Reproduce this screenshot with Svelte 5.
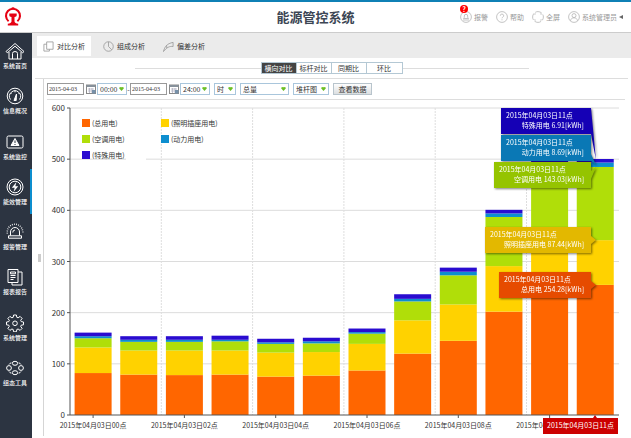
<script>
  const nav = [
    { label: '系统首页', icon: 'home' },
    { label: '信息概况', icon: 'gauge' },
    { label: '系统监控', icon: 'monitor' },
    { label: '能效管理', icon: 'energy', active: true },
    { label: '报警管理', icon: 'alarm' },
    { label: '报表报告', icon: 'report' },
    { label: '系统管理', icon: 'gear' },
    { label: '组态工具', icon: 'nodes' }
  ];

  const modes = ['横向对比', '标杆对比', '同期比', '环比'];
  let mode = $state('横向对比');
  let startDate = $state('2015-04-03');
  let endDate = $state('2015-04-03');

  // Chart geometry, in viewBox units
  const left = 26;
  const right = 575;
  const base = 315;
  const unit = 307 / 600;
  const pitch = 45.65;
  const barWidth = 37;
  const barX = (i) => left + 4.6 + i * pitch;
  const y = (v) => base - v * unit;

  const colors = ['#ff6600', '#ffd200', '#b0de09', '#0d8ecf', '#2a0cd0'];
  const legend = [
    { label: '(总用电)', color: colors[0], x: 38, y: 19 },
    { label: '(照明插座用电)', color: colors[1], x: 117, y: 19 },
    { label: '(空调用电)', color: colors[2], x: 38, y: 35 },
    { label: '(动力用电)', color: colors[3], x: 117, y: 35 },
    { label: '(特殊用电)', color: colors[4], x: 38, y: 51 }
  ];

  // total, lighting, air conditioning, power, special
  const readings = [
    [82, 50, 18, 4, 7],
    [79, 47, 17, 4, 7],
    [78, 48, 17, 4, 7],
    [79, 47, 18, 3, 8],
    [75, 47, 17, 3, 7],
    [77, 46, 17, 4, 7],
    [87, 52, 20, 3, 7],
    [120, 65, 37, 5, 9],
    [145, 71, 57, 7, 8],
    [202, 89, 96, 7, 7],
    [240, 88, 156, 9, 9],
    [254.28, 87.44, 143.03, 8.69, 6.91]
  ];

  const bars = readings.map((values, i) => {
    let sum = 0;
    return values.map((v, k) => {
      sum += v;
      return { x: barX(i), y: y(sum), h: v * unit, color: colors[k] };
    });
  });

  // from/to: where the pointer leaves the box edge; tipY: where it ends
  const tips = [
    { x: 457, y: 8, text: '特殊用电 6.91[kWh]', color: '#1500b5', from: 8, to: 34, tipY: 60 },
    { x: 457, y: 35, text: '动力用电 8.69[kWh]', color: '#0a78b5', from: 54, to: 61, tipY: 65 },
    { x: 450, y: 62, text: '空调用电 143.03[kWh]', color: '#95c400', from: 71, to: 79, tipY: 67 },
    { x: 441, y: 127, text: '照明插座用电 87.44[kWh]', color: '#e3b800', from: 136, to: 144, tipY: 140 },
    { x: 455, y: 172, text: '总用电 254.28[kWh]', color: '#e64b00', from: 181, to: 189, tipY: 185 }
  ];
</script>

{#snippet select(cls, name, options)}
  <span class="select {cls}">
    <select aria-label={name}>
      {#each options as option}<option>{option}</option>{/each}
    </select>
    <svg viewBox="0 0 6 5" aria-hidden="true"><path d="M1 0h4l1 1.5L3 5 0 1.5z" fill="#69bd25" /><path d="M1.5.8h3" stroke="#a8e36f" stroke-width=".7" /></svg>
  </span>
{/snippet}

{#snippet calendar()}
  <button class="cal" aria-label="选择日期">
    <svg viewBox="0 0 10 10"><rect x=".5" y="1" width="9" height="8.5" fill="#fff" stroke="#888" /><path d="M.5 1h9v2h-9z" fill="#87919b" /><path d="M2 5h6M2 7h6M3.5 4v5M6 4v5" stroke="#aab" stroke-width=".7" /><path d="M6 6h3.500v3.500H6z" fill="#7791aa" /></svg>
  </button>
{/snippet}

<div class="page">
  <header>
    <a class="logo" href="#home" aria-label="首页">
      <svg viewBox="0 0 18 20" fill="none" stroke="#e60012">
        <path d="M4.600 14.200A7 7 0 1 1 13.400 14.200" stroke-width="2.100" />
        <path d="M5.300 6.500h7.400v1.700c0 1-.8 1.500-2.200 1.700v4.600c.2 1.300 1.500 1.900 3.700 2.300v1.600H3.800v-1.600c2.200-.4 3.500-1 3.700-2.300V9.900c-1.400-.2-2.200-.7-2.200-1.700z" fill="#e60012" stroke="none" />
        <path d="M9 .4v2" stroke-width="2.600" />
      </svg>
    </a>
    <h1>能源管控系统</h1>
    <div class="tools">
      <button class="tool">
        <svg viewBox="0 0 12 12"><circle cx="6" cy="6" r="5.400" /><path d="M3.500 7.500h5l-.8-1.200V5a1.700 1.700 0 0 0-3.400 0v1.300zM3 9h6" /></svg>
        报警<span class="badge">?</span>
      </button>
      <button class="tool">
        <svg viewBox="0 0 12 12"><circle cx="6" cy="6" r="5.400" /><path d="M4.300 4.700a1.700 1.600 0 1 1 2.500 1.400q-.8.400-.8 1.200M6 8.300v1" /></svg>
        帮助
      </button>
      <button class="tool">
        <svg viewBox="0 0 12 12"><circle cx="6" cy="6" r="5.400" stroke-dasharray="7 1.480" stroke-dashoffset="3.500" /><path d="M2.800 4V2.800H4M8 2.800h1.200V4M9.200 8v1.200H8M4 9.200H2.800V8" stroke-width=".5" /></svg>
        全屏
      </button>
      <button class="tool">
        <svg viewBox="0 0 12 12"><circle cx="6" cy="6" r="5.400" /><circle cx="6" cy="4.600" r="2" /><path d="M2.500 9.800c.3-2 1.600-3 3.500-3s3.200 1 3.500 3" /></svg>
        系统管理员
        <svg class="caret" viewBox="0 0 4 4"><path d="M4 0v4L0 2z" /></svg>
      </button>
    </div>
  </header>

  <div class="body">
    <nav>
      {#each nav as item}
        <a href="#{item.icon}" class:active={item.active}>
          <svg viewBox="0 0 20 18">
            {#if item.icon === 'home'}
              <path d="M1 9.500 10 1.500l9 8-1.300 1.300L10 4.200l-7.700 6.600zM4 10v7h12v-7M7.500 17v-5.500q0-2 2.500-2t2.500 2V17" />
            {:else if item.icon === 'gauge'}
              <circle cx="10" cy="9" r="7.800" /><path d="M5.500 12.500a5.500 5.500 0 1 1 9 0M10 3.800v1.500M5.500 6l1 1M14.500 6l-1 1" /><path d="M9 13.500 11.500 7l-.3 6.500z" fill="#fff" />
            {:else if item.icon === 'monitor'}
              <rect x="2" y="3" width="16" height="12" rx="1.500" /><path d="M10 5.500l4 7H6z" fill="#fff" /><path d="M10 7.500v2.500M10 11v1" stroke="#2c3441" />
            {:else if item.icon === 'energy'}
              <circle cx="10" cy="9" r="8" /><circle cx="10" cy="9" r="5.800" /><path d="M11.500 4 6.800 9.800h2.900L8.500 14l4.700-5.800h-2.900z" fill="#fff" stroke="none" />
            {:else if item.icon === 'alarm'}
              <path d="M5.500 12.500V9a4.500 4.500 0 0 1 9 0v3.500M3.500 12.800h13v2.400h-13zM7.800 9.500q0-2.500 2.200-2.500" /><path d="M2.300 10.500a7.800 8 0 1 1 15.400 0" stroke-dasharray=".8 1.300" stroke-width="1.500" />
            {:else if item.icon === 'report'}
              <path d="M3 1.500h10v13H3zM13 4h4v13H7v-2.500M5.500 7.500h5M5.500 9.500h5M5.500 11.500h3M5.500 4h5v1.800h-5z" />
            {:else if item.icon === 'gear'}
              <path d="M8.600 1h2.800l.4 2.300 1.300.5 2-1.400 2 2-1.400 2 .5 1.200 2.300.4v2.800l-2.300.4-.5 1.200 1.400 2-2 2-2-1.400-1.300.5-.4 2.300H8.600l-.4-2.300-1.300-.5-2 1.400-2-2 1.400-2-.5-1.200L1.500 10.800V8l2.300-.4.500-1.200-1.400-2 2-2 2 1.400 1.300-.5z" /><circle cx="10" cy="9.300" r="2.300" />
            {:else}
              <ellipse cx="10" cy="4.300" rx="2.700" ry="2" /><ellipse cx="10" cy="13.700" rx="2.700" ry="2" /><circle cx="4" cy="9" r="2.400" /><circle cx="16" cy="9" r="2.400" /><path d="M4 5.500Q5 4 6.300 3.800M13.700 3.800Q15 4 16 5.500M4 12.500q1 1.500 2.300 1.700M13.700 14.200q1.300-.2 2.300-1.700" />
            {/if}
          </svg>
          <span>{item.label}</span>
        </a>
      {/each}
    </nav>

    <main>
      <div class="tabs">
        <button class="tab active">
          <svg viewBox="0 0 12 12"><path d="M4 1h7v8H4zM4 3.500H1V11h6V9" /></svg>对比分析
        </button>
        <button class="tab">
          <svg viewBox="0 0 12 12"><circle cx="6" cy="6" r="5.200" /><path d="M6 1v5l3.500 3.500" /></svg>组成分析
        </button>
        <button class="tab">
          <svg viewBox="0 0 12 12"><path d="M.5 11.500C2 6 4 3 11 1.500V6C7 5.500 4 7 .5 11.500M4 4.500v3" /></svg>偏差分析
        </button>
      </div>

      <div class="modes">
        <div class="segments">
          {#each modes as m}
            <button class:on={m === mode} onclick={() => (mode = m)}>{m}</button>
          {/each}
        </div>
      </div>

      <div class="content">
        <div class="splitter"><i></i></div>
        <section>
          <div class="filters">
            <input aria-label="开始日期" bind:value={startDate} />
            {@render calendar()}
            {@render select('time', '开始时间', ['00:00'])}
            <span class="dash">-</span>
            <input aria-label="结束日期" bind:value={endDate} />
            {@render calendar()}
            {@render select('time', '结束时间', ['24:00'])}
            {@render select('step', '粒度', ['时', '日'])}
            {@render select('kind', '类型', ['总量', '分量'])}
            {@render select('chart-type', '图表', ['堆杆图', '折线图'])}
            <button class="view">查看数据</button>
          </div>

          <svg class="chart" viewBox="0 0 587 336" role="img" aria-label="分时用电堆积图">
            {#each [100, 200, 300, 400, 500, 600] as v}
              <line x1={left} x2={right} y1={y(v)} y2={y(v)} stroke="#dcdcdc" />
            {/each}
            {#each [1, 2, 3, 4, 5] as k}
              <line x1={left + k * 2 * pitch} x2={left + k * 2 * pitch} y1={y(600)} y2={base} stroke="#dedede" stroke-dasharray="2 1" />
            {/each}
            <rect x="82" y="46" width="20" height="16" fill="#fff" />

            {#each legend as l}
              <rect x={l.x} y={l.y} width="8" height="8" fill={l.color} />
              <text x={l.x + 10} y={l.y + 7}>{l.label}</text>
            {/each}

            {#each bars as bar}
              {#each bar as s}
                <rect x={s.x} y={s.y} width={barWidth} height={s.h} fill={s.color} />
              {/each}
            {/each}

            <path d="M{left} {y(600)}V{base}H{right}" fill="none" stroke="#555" />
            {#each [0, 100, 200, 300, 400, 500, 600] as v}
              <line x1={left - 3} x2={left} y1={y(v)} y2={y(v)} stroke="#555" />
              <text class="value" x="21" y={y(v) + 3} text-anchor="end">{v}</text>
            {/each}
            {#each ['00', '02', '04', '06', '08', '10'] as hour, k}
              <line x1={barX(k * 2) + 18.5} x2={barX(k * 2) + 18.5} y1={base} y2={base + 3} stroke="#555" />
              <text x={barX(k * 2) + 18.5} y="328" text-anchor="middle">2015年04月03日{hour}点</text>
            {/each}

            {#each tips as t}
              <g class="tip">
                <path d="M{t.x} {t.y}H547V{t.from}L552 {t.tipY}L547 {t.to}V{t.y + 26}H{t.x}z" fill={t.color} />
                <text x={t.x + 5} y={t.y + 10}>2015年04月03日11点</text>
                <text x="540" y={t.y + 20} text-anchor="end">{t.text}</text>
              </g>
            {/each}

            <path d="M499 318H549L551 315L553 318H574V334H499z" fill="#cc0000" />
            <text class="light" x="536.5" y="328" text-anchor="middle">2015年04月03日11点</text>
          </svg>
        </section>
      </div>
    </main>
  </div>
</div>

<style>
  :global(body) {
    background: #fff;
  }
  .page {
    display: flex;
    flex-direction: column;
    min-height: 100vh;
    box-sizing: border-box;
    font: 7px/10px 'Noto Sans CJK SC', 'Noto Sans', sans-serif;
    color: #333;
  }
  button,
  input,
  select {
    font: inherit;
    color: inherit;
    margin: 0;
    padding: 0;
    border: 0;
    background: none;
    box-sizing: border-box;
  }
  svg {
    display: block;
    flex: none;
  }
  header {
    display: grid;
    grid-template-columns: 1fr auto 1fr;
    align-items: center;
    height: 33px;
    box-sizing: border-box;
    border-top: 2px solid #0f80b5;
    border-bottom: 1px solid #ccc;
  }
  .logo {
    padding-left: 4px;
  }
  .logo svg {
    width: 18px;
    height: 20px;
  }
  h1 {
    margin: 0;
    font-size: 13px;
    line-height: 20px;
    font-weight: 700;
    color: #3c4654;
  }
  .tools {
    display: flex;
    justify-content: flex-end;
    gap: 8px;
    padding-right: 8px;
  }
  .tool {
    position: relative;
    display: flex;
    align-items: center;
    gap: 2px;
    color: #999;
  }
  .tool svg {
    width: 12px;
    height: 12px;
    fill: none;
    stroke: #b5b5b5;
    stroke-width: 0.8;
  }
  .tool .caret {
    width: 4px;
    height: 4px;
    fill: #666;
    stroke: none;
  }
  .badge {
    position: absolute;
    left: 0;
    top: -6px;
    width: 8px;
    height: 8px;
    border-radius: 4px;
    background: #f00;
    color: #fff;
    font-weight: 700;
    line-height: 8px;
    text-align: center;
  }
  .body {
    flex: 1;
    display: flex;
  }
  nav {
    flex: none;
    display: flex;
    flex-direction: column;
    width: 32px;
    padding-bottom: 43px;
    box-sizing: border-box;
    background: #2c3441;
  }
  nav a {
    flex: 1;
    display: flex;
    flex-direction: column;
    align-items: center;
    gap: 1px;
    padding: 9px 0 0;
    box-sizing: border-box;
    border-right: 2px solid transparent;
    color: #fff;
    font-size: 6px;
    font-weight: 500;
    text-decoration: none;
    white-space: nowrap;
  }
  nav a.active {
    border-color: #0d8ecf;
  }
  nav svg {
    width: 20px;
    height: 18px;
    fill: none;
    stroke: #fff;
    stroke-width: 1;
  }
  main {
    flex: 1;
    min-width: 0;
    display: flex;
    flex-direction: column;
  }
  .tabs {
    display: flex;
    gap: 6px;
    height: 25px;
    padding: 3px 5px 2px;
    box-sizing: border-box;
    background: #ebebeb;
  }
  .tab {
    display: flex;
    align-items: center;
    gap: 3px;
    padding: 0 6px;
  }
  .tab.active {
    background: #fff;
  }
  .tab svg {
    width: 11px;
    height: 11px;
    fill: none;
    stroke: #999;
    stroke-width: 0.9;
  }
  .modes {
    display: flex;
    align-items: center;
    justify-content: center;
    height: 21px;
    margin: 0 3px;
    box-sizing: border-box;
    border-bottom: 1px solid #ddd;
  }
  .modes::before,
  .modes::after {
    content: '';
    width: 126px;
    height: 1px;
    background: #ddd;
  }
  .segments {
    display: flex;
    border: 1px solid #b4c8d4;
  }
  .segments button {
    width: 35px;
    height: 10px;
    border-right: 1px solid #b4c8d4;
  }
  .segments button:last-child {
    border: 0;
  }
  .segments .on {
    background: #444;
    color: #fff;
  }
  .content {
    flex: 1;
    display: flex;
    padding-bottom: 2px;
  }
  .splitter {
    display: flex;
    align-items: center;
    justify-content: center;
    width: 12px;
    box-sizing: border-box;
    border-right: 1px solid #d5d5d5;
    padding-left: 4px;
  }
  .splitter i {
    width: 3px;
    height: 8px;
    background: #ccc;
  }
  section {
    flex: 1;
    min-width: 0;
  }
  .filters {
    display: flex;
    align-items: center;
    height: 21px;
    margin: 0 6px 0 3px;
    box-sizing: border-box;
    border-bottom: 1px solid #ddd;
  }
  .filters input {
    width: 37px;
    height: 12px;
    padding: 0 1px;
    border: 1px solid #999;
    font: 6px/10px 'Liberation Serif', serif;
  }
  .cal {
    margin: 0 1px 0 2px;
  }
  .cal svg {
    width: 10px;
    height: 10px;
  }
  .select {
    position: relative;
    height: 12px;
  }
  .select select {
    display: block;
    width: 100%;
    height: 12px;
    padding: 0 2px;
    appearance: none;
    border: 1px solid #a9c6dc;
    background: #fff;
  }
  .select svg {
    position: absolute;
    right: 3px;
    top: 4px;
    width: 5px;
    height: 4px;
    pointer-events: none;
  }
  .time {
    width: 30px;
  }
  .dash {
    width: 3px;
    text-align: center;
  }
  .step {
    width: 22px;
    margin-left: 4px;
  }
  .kind {
    width: 49px;
    margin-left: 4px;
  }
  .chart-type {
    width: 36px;
    margin-left: 4px;
  }
  .view {
    width: 39px;
    height: 12px;
    margin-left: 4px;
    border: 1px solid #b8c4cc;
    background: linear-gradient(#fdfdfd, #dcdfe1);
  }
  .chart {
    width: 100%;
    height: auto;
  }
  .chart text {
    font-size: 7px;
    fill: #333;
  }
  .chart .value {
    font-size: 8px;
  }
  .tip {
    filter: drop-shadow(1px 1px 1px rgba(0, 0, 0, 0.5));
  }
  .chart .tip text,
  .chart .light {
    fill: #fff;
  }
</style>
